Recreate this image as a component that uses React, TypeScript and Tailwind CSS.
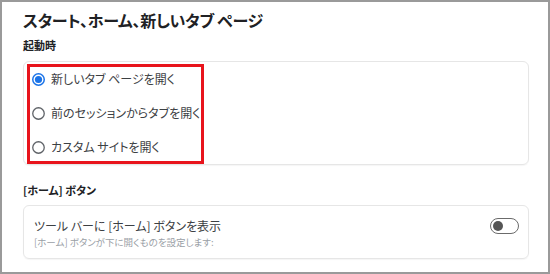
import { useState } from 'react'

const jp = "font-['Noto_Sans_CJK_JP','Noto_Sans',sans-serif] [font-feature-settings:'palt']"

const options = ['新しいタブ ページを開く', '前のセッションからタブを開く', 'カスタム サイトを開く']

const Radio = ({ checked }: { checked: boolean }) => (
  <svg width="13" height="13" viewBox="0 0 13 13" className="shrink-0">
    {checked ? (
      <>
        <circle cx="6.5" cy="6.5" r="5.75" fill="none" stroke="#1a73e8" strokeWidth="1.5" />
        <circle cx="6.5" cy="6.5" r="3.6" fill="#1a73e8" />
      </>
    ) : (
      <circle cx="6.5" cy="6.5" r="5.75" fill="none" stroke="#5f6368" strokeWidth="1.3" />
    )}
  </svg>
)

export default function App() {
  const [selected, setSelected] = useState(0)
  const [showHome, setShowHome] = useState(false)

  return (
    <div className={`w-[550px] h-[274px] border-2 border-[#9a9a9a] bg-white px-[21px] pr-[19px] pt-[8px] ${jp}`}>
      <h1 className="text-[16px] leading-[20px] font-bold tracking-[-0.3px] text-[#202124]">スタート、ホーム、新しいタブ ページ</h1>

      <h2 className="mt-[7px] text-[11px] leading-[16px] font-bold text-[#202124]">起動時</h2>

      <div className="relative mt-[8px] rounded-[6px] border border-[#e6e6e6] shadow-[0_1px_1px_rgba(0,0,0,0.04)]">
        {options.map((label, i) => (
          <button
            key={label}
            type="button"
            onClick={() => setSelected(i)}
            className="flex h-[34px] w-full items-center gap-[6px] pl-[8px] text-left"
          >
            <Radio checked={selected === i} />
            <span className="text-[12px] leading-[16px] text-[#3c4043]">{label}</span>
          </button>
        ))}
        {/* annotation box */}
        <div className="pointer-events-none absolute left-[3px] top-[2px] h-[100px] w-[177px] border-[3px] border-[#e8141c]" />
      </div>

      <h2 className="mt-[17px] text-[11px] leading-[16px] font-bold text-[#202124]">[ホーム] ボタン</h2>

      <div className="mt-[7px] flex items-start justify-between rounded-[6px] border border-[#e6e6e6] pl-[10px] pr-[9px] pt-[12px] pb-[10px] shadow-[0_1px_1px_rgba(0,0,0,0.04)]">
        <div className="flex flex-col gap-[2px]">
          <span className="text-[12px] leading-[16px] text-[#3c4043]">ツール バーに [ホーム] ボタンを表示</span>
          <span className="text-[9.5px] leading-[12px] text-[#9aa0a6]">[ホーム] ボタンが下に開くものを設定します:</span>
        </div>
        <button
          type="button"
          onClick={() => setShowHome(!showHome)}
          className="flex h-[16px] w-[29px] items-center rounded-full border-[1.5px] border-[#6b6b6b] bg-white px-[2px]"
        >
          <span className={`h-[10px] w-[10px] rounded-full bg-[#555] ${showHome ? 'ml-auto' : ''}`} />
        </button>
      </div>
    </div>
  )
}
